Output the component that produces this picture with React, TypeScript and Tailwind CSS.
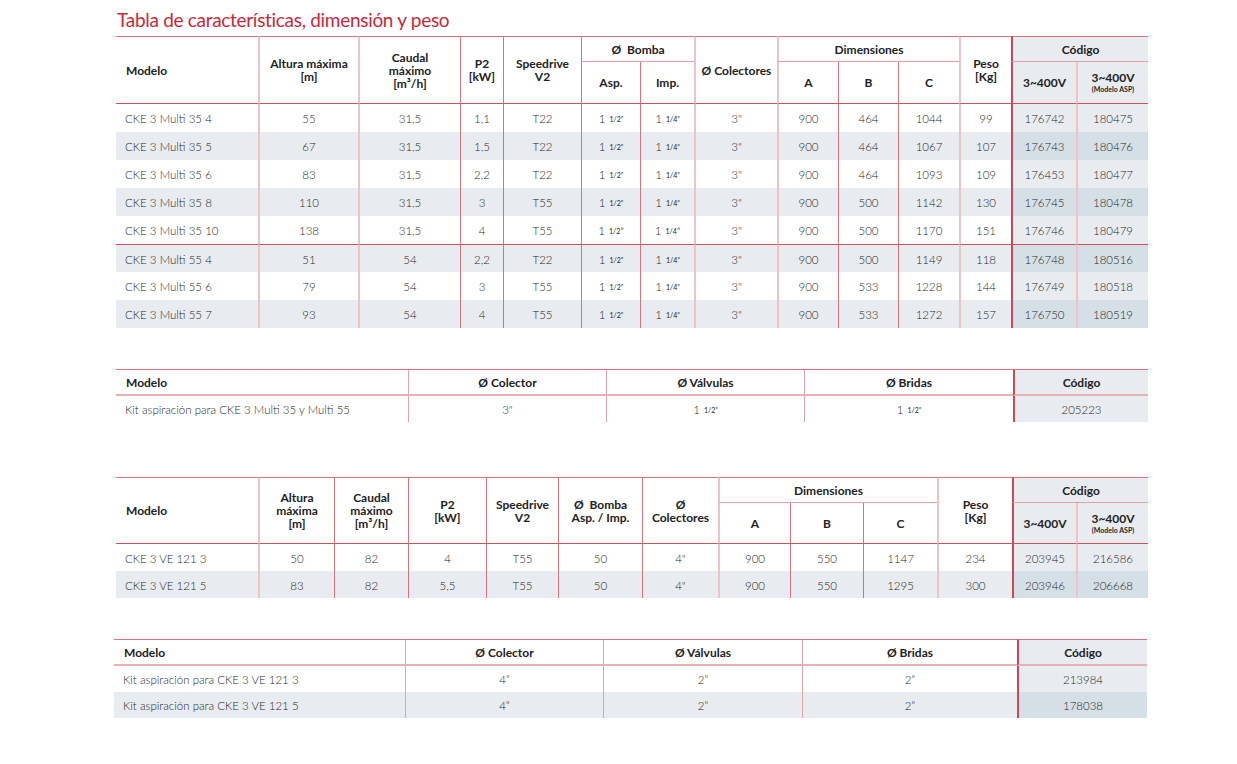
import React from "react";

const FONT = { fontFamily: "Lato, 'Noto Sans', sans-serif" };

type Row = string[];

const t1: Row[] = [
  ["CKE 3 Multi 35 4", "55", "31,5", "1,1", "T22", "1/2”", "1/4”", "3\"", "900", "464", "1044", "99", "176742", "180475"],
  ["CKE 3 Multi 35 5", "67", "31,5", "1,5", "T22", "1/2”", "1/4”", "3\"", "900", "464", "1067", "107", "176743", "180476"],
  ["CKE 3 Multi 35 6", "83", "31,5", "2,2", "T22", "1/2”", "1/4”", "3\"", "900", "464", "1093", "109", "176453", "180477"],
  ["CKE 3 Multi 35 8", "110", "31,5", "3", "T55", "1/2”", "1/4”", "3\"", "900", "500", "1142", "130", "176745", "180478"],
  ["CKE 3 Multi 35 10", "138", "31,5", "4", "T55", "1/2\u2033", "1/4\u2033", "3\"", "900", "500", "1170", "151", "176746", "180479"],
  ["CKE 3 Multi 55 4", "51", "54", "2,2", "T22", "1/2”", "1/4”", "3\"", "900", "500", "1149", "118", "176748", "180516"],
  ["CKE 3 Multi 55 6", "79", "54", "3", "T55", "1/2”", "1/4”", "3\"", "900", "533", "1228", "144", "176749", "180518"],
  ["CKE 3 Multi 55 7", "93", "54", "4", "T55", "1/2”", "1/4”", "3\"", "900", "533", "1272", "157", "176750", "180519"],
];

const t3: Row[] = [
  ["CKE 3 VE 121 3", "50", "82", "4", "T55", "50", "4\"", "900", "550", "1147", "234", "203945", "216586"],
  ["CKE 3 VE 121 5", "83", "82", "5,5", "T55", "50", "4\"", "900", "550", "1295", "300", "203946", "206668"],
];

const PINK = "border-l-2 border-l-[#eec3c8]";
const RED = "border-l border-l-[#d8737d]";
const CODE = "border-l-2 border-l-[#c84a56]";

function Frac({ v }: { v: string }) {
  return (
    <span className="font-light">
      1 <sup className="text-[7px] ml-[1px] relative top-[-1px] font-normal">{v}</sup>
    </span>
  );
}

const t1Borders = ["", PINK, PINK, RED, RED, RED, RED, PINK, PINK, RED, RED, PINK, CODE, PINK];
const t3Borders = ["", PINK, RED, RED, RED, RED, RED, PINK, RED, RED, PINK, CODE, PINK];

const th = "font-bold text-[12px] leading-[13px] text-[#222] text-center align-middle p-0";
const td = "font-light text-[11.5px] text-[#1f1f1f] text-center align-middle p-0";

function Table1() {
  const widths = [142, 100, 102, 43, 78, 59, 54, 83, 61, 60, 61, 52, 65, 72];
  return (
    <table className="table-fixed border-separate border-spacing-0 w-[1032px] ml-[116px]">
      <colgroup>
        {widths.map((w, i) => (
          <col key={i} style={{ width: w }} />
        ))}
      </colgroup>
      <thead>
        <tr className="h-[26px]">
          <th rowSpan={2} className={`${th} text-left pl-[10px] border-t border-t-[#d8737d] border-b border-b-[#d0505c]`}>Modelo</th>
          <th rowSpan={2} className={`${th} ${PINK} border-t border-t-[#d8737d] border-b border-b-[#d0505c]`}>Altura máxima<br />[m]</th>
          <th rowSpan={2} className={`${th} ${PINK} border-t border-t-[#d8737d] border-b border-b-[#d0505c]`}>Caudal<br />máximo<br />[m³/h]</th>
          <th rowSpan={2} className={`${th} ${RED} border-t border-t-[#d8737d] border-b border-b-[#d0505c]`}>P2<br />[kW]</th>
          <th rowSpan={2} className={`${th} ${RED} border-t border-t-[#d8737d] border-b border-b-[#d0505c]`}>Speedrive<br />V2</th>
          <th colSpan={2} className={`${th} ${RED} border-t border-t-[#d8737d] border-b border-b-[#e6a0a8]`}>Ø&nbsp; Bomba</th>
          <th rowSpan={2} className={`${th} ${PINK} border-t border-t-[#d8737d] border-b border-b-[#d0505c]`}>Ø Colectores</th>
          <th colSpan={3} className={`${th} ${PINK} border-t border-t-[#d8737d] border-b border-b-[#e6a0a8]`}>Dimensiones</th>
          <th rowSpan={2} className={`${th} ${PINK} border-t border-t-[#d8737d] border-b border-b-[#d0505c]`}>Peso<br />[Kg]</th>
          <th colSpan={2} className={`${th} ${CODE} bg-[#e8ecf0] border-t border-t-[#d8737d] border-b border-b-[#e6a0a8]`}>Código</th>
        </tr>
        <tr className="h-[42px]">
          <th className={`${th} ${RED} border-b border-b-[#d0505c]`}>Asp.</th>
          <th className={`${th} ${RED} border-b border-b-[#d0505c]`}>Imp.</th>
          <th className={`${th} ${PINK} border-b border-b-[#d0505c]`}>A</th>
          <th className={`${th} ${RED} border-b border-b-[#d0505c]`}>B</th>
          <th className={`${th} ${RED} border-b border-b-[#d0505c]`}>C</th>
          <th className={`${th} ${CODE} bg-[#e8ecf0] border-b border-b-[#d0505c]`}>3~400V</th>
          <th className={`${th} ${PINK} bg-[#e8ecf0] border-b border-b-[#d0505c]`}>
            3~400V
            <div className="text-[7px] leading-[9px] font-bold mt-[1px]">(Modelo ASP)</div>
          </th>
        </tr>
      </thead>
      <tbody>
        {t1.map((r, ri) => {
          const striped = ri % 2 === 1;
          const sep = ri === 5 ? "border-t border-t-[#d0505c]" : "";
          return (
            <tr key={ri} className={`h-[28px] ${striped ? "bg-[#e8ecf0]" : ""}`}>
              {r.map((c, ci) => {
                const codeBg = ci >= 12 ? (striped ? "bg-[#d5dfe6]" : "bg-[#e8ecf0]") : "";
                const align = ci === 0 ? "text-left pl-[9px]" : "";
                return (
                  <td key={ci} className={`${td} ${t1Borders[ci]} ${codeBg} ${align} ${sep} pt-[2px]`}>
                    {ci === 5 || ci === 6 ? <Frac v={c} /> : c}
                  </td>
                );
              })}
            </tr>
          );
        })}
      </tbody>
    </table>
  );
}

function Table3() {
  const widths = [142, 76, 74, 78, 72, 84, 76, 72, 73, 74, 75, 64, 72];
  const b = "border-t border-t-[#d8737d] border-b border-b-[#d0505c]";
  return (
    <table className="table-fixed border-separate border-spacing-0 w-[1032px] ml-[116px]">
      <colgroup>
        {widths.map((w, i) => (
          <col key={i} style={{ width: w }} />
        ))}
      </colgroup>
      <thead>
        <tr className="h-[26px]">
          <th rowSpan={2} className={`${th} text-left pl-[10px] ${b}`}>Modelo</th>
          <th rowSpan={2} className={`${th} ${PINK} ${b}`}>Altura<br />máxima<br />[m]</th>
          <th rowSpan={2} className={`${th} ${RED} ${b}`}>Caudal<br />máximo<br />[m³/h]</th>
          <th rowSpan={2} className={`${th} ${RED} ${b}`}>P2<br />[kW]</th>
          <th rowSpan={2} className={`${th} ${RED} ${b}`}>Speedrive<br />V2</th>
          <th rowSpan={2} className={`${th} ${RED} ${b}`}>Ø&nbsp; Bomba<br />Asp. / Imp.</th>
          <th rowSpan={2} className={`${th} ${RED} ${b}`}>Ø<br />Colectores</th>
          <th colSpan={3} className={`${th} ${PINK} border-t border-t-[#d8737d] border-b border-b-[#e6a0a8]`}>Dimensiones</th>
          <th rowSpan={2} className={`${th} ${PINK} ${b}`}>Peso<br />[Kg]</th>
          <th colSpan={2} className={`${th} ${CODE} bg-[#e8ecf0] border-t border-t-[#d8737d] border-b border-b-[#e6a0a8]`}>Código</th>
        </tr>
        <tr className="h-[41px]">
          <th className={`${th} ${PINK} border-b border-b-[#d0505c]`}>A</th>
          <th className={`${th} ${RED} border-b border-b-[#d0505c]`}>B</th>
          <th className={`${th} ${RED} border-b border-b-[#d0505c]`}>C</th>
          <th className={`${th} ${CODE} bg-[#e8ecf0] border-b border-b-[#d0505c]`}>3~400V</th>
          <th className={`${th} ${PINK} bg-[#e8ecf0] border-b border-b-[#d0505c]`}>
            3~400V
            <div className="text-[7px] leading-[9px] font-bold mt-[1px]">(Modelo ASP)</div>
          </th>
        </tr>
      </thead>
      <tbody>
        {t3.map((r, ri) => {
          const striped = ri % 2 === 1;
          return (
            <tr key={ri} className={`h-[27px] ${striped ? "bg-[#e8ecf0]" : ""}`}>
              {r.map((c, ci) => {
                const codeBg = ci >= 11 ? (striped ? "bg-[#d5dfe6]" : "bg-[#e8ecf0]") : "";
                const align = ci === 0 ? "text-left pl-[9px]" : "";
                return (
                  <td key={ci} className={`${td} ${t3Borders[ci]} ${codeBg} ${align} pt-[2px]`}>
                    {c}
                  </td>
                );
              })}
            </tr>
          );
        })}
      </tbody>
    </table>
  );
}

function KitTable({
  widths,
  left,
  rows,
}: {
  widths: number[];
  left: string;
  rows: { model: string; col: string; val: React.ReactNode; bri: React.ReactNode; code: string }[];
}) {
  const borders = ["", "border-l border-l-[#e2a3aa]", "border-l border-l-[#e2a3aa]", "border-l border-l-[#e2a3aa]", "border-l-2 border-l-[#c84a56]"];
  const hb = "border-t border-t-[#d8737d] border-b-2 border-b-[#e9b0b6]";
  return (
    <table className={`table-fixed border-separate border-spacing-0 ${left}`} style={{ width: widths.reduce((a, b) => a + b, 0) }}>
      <colgroup>
        {widths.map((w, i) => (
          <col key={i} style={{ width: w }} />
        ))}
      </colgroup>
      <thead>
        <tr className="h-[27px]">
          <th className={`${th} text-left pl-[10px] ${hb}`}>Modelo</th>
          <th className={`${th} ${borders[1]} ${hb}`}>Ø Colector</th>
          <th className={`${th} ${borders[2]} ${hb}`}>Ø Válvulas</th>
          <th className={`${th} ${borders[3]} ${hb}`}>Ø Bridas</th>
          <th className={`${th} ${borders[4]} ${hb} bg-[#e8ecf0]`}>Código</th>
        </tr>
      </thead>
      <tbody>
        {rows.map((r, ri) => {
          const striped = ri % 2 === 1;
          const codeBg = striped ? "bg-[#d5dfe6]" : "bg-[#e8ecf0]";
          return (
            <tr key={ri} className={`h-[26px] ${striped ? "bg-[#e8ecf0]" : ""}`}>
              <td className={`${td} text-left pl-[9px] pt-[2px]`}>{r.model}</td>
              <td className={`${td} ${borders[1]} pt-[2px]`}>{r.col}</td>
              <td className={`${td} ${borders[2]} pt-[2px]`}>{r.val}</td>
              <td className={`${td} ${borders[3]} pt-[2px]`}>{r.bri}</td>
              <td className={`${td} ${borders[4]} ${codeBg} pt-[2px]`}>{r.code}</td>
            </tr>
          );
        })}
      </tbody>
    </table>
  );
}

export default function App() {
  return (
    <div className="w-[1237px] h-[764px] bg-white overflow-hidden" style={FONT}>
      <div className="pt-[8px] pl-[117px] h-[36px] text-[19px] leading-[24px] tracking-[-0.3px] text-[#c8283a]">
        Tabla de características, dimensión y peso
      </div>
      <Table1 />
      <div className="h-[41px]" />
      <KitTable
        widths={[292, 198, 198, 209, 135]}
        left="ml-[116px]"
        rows={[
          {
            model: "Kit aspiración para CKE 3 Multi 35 y Multi 55",
            col: "3\"",
            val: <Frac v="1/2”" />,
            bri: <Frac v="1/2”" />,
            code: "205223",
          },
        ]}
      />
      <div className="h-[55px]" />
      <Table3 />
      <div className="h-[41px]" />
      <KitTable
        widths={[291, 198, 199, 215, 130]}
        left="ml-[114px]"
        rows={[
          { model: "Kit aspiración para CKE 3 VE 121 3", col: "4”", val: "2”", bri: "2”", code: "213984" },
          { model: "Kit aspiración para CKE 3 VE 121 5", col: "4”", val: "2”", bri: "2”", code: "178038" },
        ]}
      />
    </div>
  );
}
